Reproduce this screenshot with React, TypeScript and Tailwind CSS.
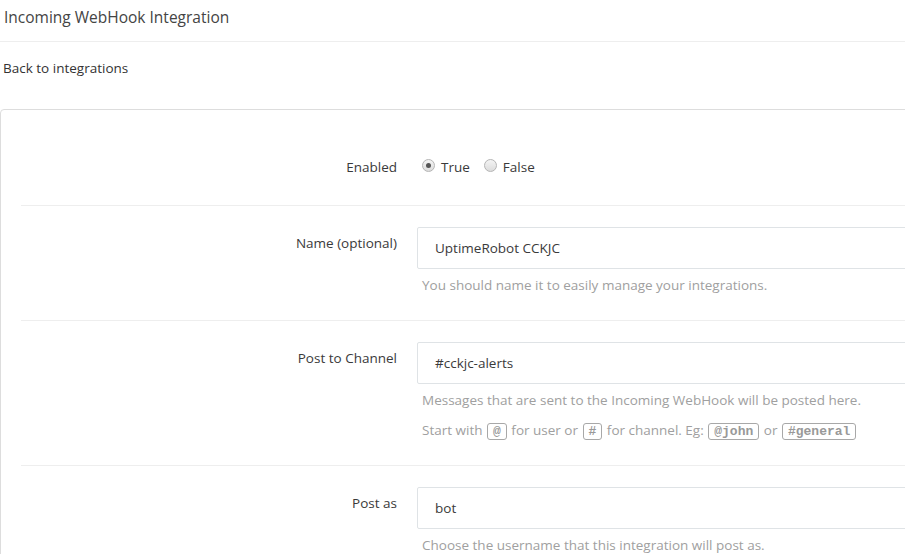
const font = { fontFamily: '"Open Sans", "Noto Sans", sans-serif' };

function Code({ children }: { children: string }) {
  return (
    <code className="mx-[1px] inline-block rounded-[3px] border border-[#a8a8a8] px-[5px] font-['Liberation_Mono',monospace] text-[13px] font-bold leading-[15px] text-[#999]">
      {children}
    </code>
  );
}

function Radio({ checked }: { checked?: boolean }) {
  return (
    <span className="flex h-[13px] w-[13px] items-center justify-center rounded-full border border-[#b5b5b5] bg-gradient-to-b from-[#f4f4f4] to-[#dcdcdc]">
      {checked && <span className="h-[5px] w-[5px] rounded-full bg-[#555]" />}
    </span>
  );
}

function Row({ label, children, last }: { label: string; children: React.ReactNode; last?: boolean }) {
  return (
    <div className={`flex gap-[20px] pt-[21px] pb-[25px] ${last ? '' : 'border-b border-[#eee]'}`}>
      <div className="w-[376px] shrink-0 pt-[7px] text-right leading-[18px] text-[#3a3a3a]">{label}</div>
      <div className="min-w-0 flex-1">{children}</div>
    </div>
  );
}

function Input({ value }: { value: string }) {
  return (
    <div className="-mr-[40px] flex h-[42px] items-center rounded-[2px] border border-[#dfe3e6] bg-white px-[17px] text-[#3a3a3a]">
      {value}
    </div>
  );
}

function Help({ children, first = true }: { children: React.ReactNode; first?: boolean }) {
  return <p className={`${first ? 'mt-[6px]' : 'mt-[10px]'} pl-[5px] leading-[20px] text-[#a0a0a0]`}>{children}</p>;
}

export default function App() {
  return (
    <div style={font} className="h-[554px] w-[905px] overflow-hidden bg-white text-[13.5px]">
      <div className="h-[42px] border-b border-[#eee] pl-[4px] pt-[6px] text-[15.5px] leading-[22px] text-[#444]">
        Incoming WebHook Integration
      </div>
      <div className="pl-[3px] pt-[16px] leading-[20px] text-[#333]">Back to integrations</div>
      <div className="mt-[31px] -mr-[10px] rounded-tl-[4px] border border-[#ddd] pl-[20px] pt-[20px]">
        <div className="flex gap-[20px] border-b border-[#eee] pt-[21px] pb-[21px]">
          <div className="w-[376px] shrink-0 pt-[7px] text-right leading-[18px] text-[#3a3a3a]">Enabled</div>
          <div className="flex h-[33px] items-start gap-[6px] pt-[7px] pl-[5px] leading-[18px] text-[#3a3a3a]">
            <span className="mt-[1px]"><Radio checked /></span>
            <span className="mr-[8px]">True</span>
            <span className="mt-[1px]"><Radio /></span>
            <span>False</span>
          </div>
        </div>
        <Row label="Name (optional)">
          <Input value="UptimeRobot CCKJC" />
          <Help>You should name it to easily manage your integrations.</Help>
        </Row>
        <Row label="Post to Channel">
          <Input value="#cckjc-alerts" />
          <Help>Messages that are sent to the Incoming WebHook will be posted here.</Help>
          <Help first={false}>
            Start with <Code>@</Code> for user or <Code>#</Code> for channel. Eg: <Code>@john</Code> or <Code>#general</Code>
          </Help>
        </Row>
        <Row label="Post as" last>
          <Input value="bot" />
          <Help>Choose the username that this integration will post as.</Help>
        </Row>
      </div>
    </div>
  );
}
